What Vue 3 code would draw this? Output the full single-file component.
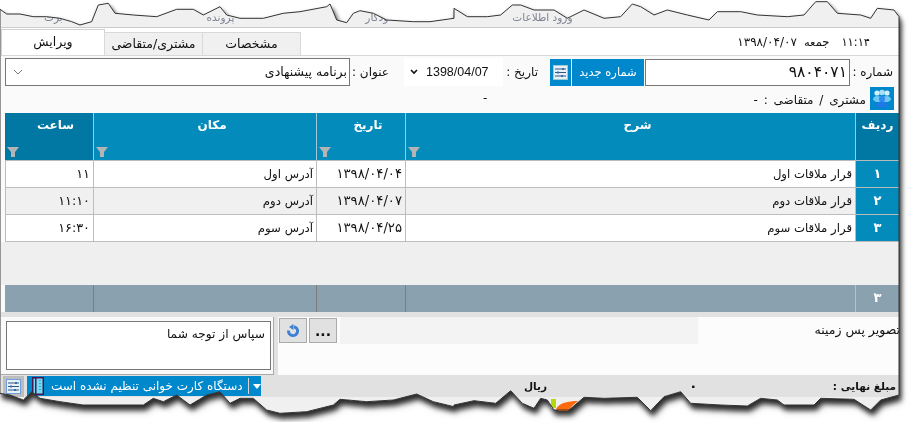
<script setup>
const scale = (list, dx, dy) => list.map(([x, y]) => [x / 3 + dx, y / 3 + dy])
const top = [
  ...scale([[0,28],[20,42],[60,42],[100,50],[140,50],[180,55],[215,65],[240,75],[275,65],[295,15],[325,10],[345,40],[400,45],[470,50],[530,28],[580,28],[610,45],[660,20],[680,45],[720,55],[790,55],[850,40],[900,35],[980,20],[990,12],[1010,60],[1040,68],[1060,40],[1080,32],[1120,40],[1160,60],[1240,65],[1290,65],[1362,55]], 0, 0),
  ...scale([[0,25],[40,50],[100,50],[140,45],[175,15],[200,15],[240,30],[300,30],[340,55],[390,30],[450,55],[500,50],[535,12],[560,20],[600,45],[640,30],[700,45],[765,60],[790,35],[860,35],[910,45],[1000,50],[1050,45],[1085,5],[1120,5],[1150,40],[1220,45],[1250,55],[1270,25],[1320,30],[1335,50]], 454, 0)
]
const bottom = [
  ...scale([[0,370],[30,375],[70,390],[95,365],[120,385],[180,395],[250,405],[350,405],[430,405],[460,385],[490,395],[530,375],[570,405],[620,375],[660,365],[690,400],[720,385],[760,385],[800,420],[840,430],[920,425],[1000,405],[1020,388],[1100,395],[1180,390],[1250,372],[1300,395],[1362,410]], 0, 270),
  ...scale([[0,405],[60,392],[125,400],[170,362],[205,400],[240,415],[260,385],[280,390],[300,420],[345,420],[390,382],[450,385],[550,382],[590,422],[630,380],[680,365],[710,400],[800,405],[880,408],[920,385],[970,390],[990,405],[1080,405],[1100,385],[1200,388],[1250,420],[1280,390],[1335,375]], 454, 270)
]
const outline = [...top, ...[...bottom].reverse()]
const clip = 'polygon(' + outline.map(([x, y]) => `${x.toFixed(1)}px ${y.toFixed(1)}px`).join(',') + ')'
const svgPoints = outline.map(([x, y]) => `${x.toFixed(1)},${y.toFixed(1)}`).join(' ')

const rows = [
  { n: '۱', desc: 'قرار ملاقات اول', date: '۱۳۹۸/۰۴/۰۴', place: 'آدرس اول', time: '۱۱' },
  { n: '۲', desc: 'قرار ملاقات دوم', date: '۱۳۹۸/۰۴/۰۷', place: 'آدرس دوم', time: '۱۱:۱۰' },
  { n: '۳', desc: 'قرار ملاقات سوم', date: '۱۳۹۸/۰۴/۲۵', place: 'آدرس سوم', time: '۱۶:۳۰' }
]
</script>

<template>
  <div class="root">
    <div class="shadow">
      <div class="window" :style="{ clipPath: clip }">
        <div class="menu">
          <span class="m m1">برت</span>
          <span class="m m2">پرونده</span>
          <span class="m m3">ودکار</span>
          <span class="m m4">ورود اطلاعات</span>
        </div>

        <div class="tabs">
          <div class="tab active">ویرایش</div>
          <div class="tab">مشتری/متقاضی</div>
          <div class="tab">مشخصات</div>
          <div class="clock" dir="rtl">
            <span>۱۱:۱۴</span>
            <span class="day">جمعه</span>
            <span class="today">۱۳۹۸/۰۴/۰۷</span>
          </div>
        </div>

        <div class="form">
          <div class="select">
            <svg width="10" height="6" viewBox="0 0 10 6"><path d="M1 1l4 4 4-4" fill="none" stroke="#777" /></svg>
            <span dir="rtl">برنامه پیشنهادی</span>
          </div>
          <span class="lab lab-title" dir="rtl">عنوان :</span>
          <div class="date">
            <svg width="8" height="6" viewBox="0 0 8 6"><path d="M1 1l3 3 3-3" fill="none" stroke="#111" stroke-width="1.6" /></svg>
            <span>1398/04/07</span>
          </div>
          <span class="lab lab-date" dir="rtl">تاریخ :</span>
          <div class="icon-btn">
            <svg width="15" height="15" viewBox="0 0 15 15">
              <rect x=".5" y=".5" width="14" height="14" fill="#e8f1fa" stroke="#9cc" />
              <path d="M2 4h11M2 7.500h11M2 11h11" stroke="#35577f" />
              <path d="M9 3h2v2H9zM4 6.500h2v2H4zM8 10h2v2H8z" fill="#2f6fb5" />
            </svg>
          </div>
          <div class="new-btn" dir="rtl">شماره جدید</div>
          <div class="number" dir="rtl">۹۸۰۴۰۷۱</div>
          <span class="lab lab-num" dir="rtl">شماره :</span>
        </div>

        <div class="customer">
          <span class="dash2">-</span>
          <span class="cust" dir="rtl">مشتری / متقاضی : -</span>
          <div class="cust-icon">
            <svg width="20" height="19" viewBox="0 0 20 19">
              <circle cx="5" cy="4" r="2.600" fill="#d2f0fc" />
              <circle cx="15" cy="4" r="2.600" fill="#d2f0fc" />
              <circle cx="10" cy="3.500" r="2.800" fill="#a8def8" />
              <path d="M1 11c0-3 2-4 4-4 2 0 3 1 5 1s3-1 5-1c2 0 4 1 4 4l-3 2H4z" fill="#70c6f4" />
              <circle cx="10" cy="10" r="3" fill="#2f8bec" />
              <path d="M4 17c0-3 3-4.500 6-4.500s6 1.500 6 4.500l-3 1.500H7z" fill="#1e78e6" />
            </svg>
          </div>
        </div>

        <div class="table">
          <div class="row head">
            <div class="c c-time dark">
              <span class="ht" dir="rtl">ساعت</span>
              <svg class="funnel" width="12" height="10" viewBox="0 0 12 10"><path d="M0 0h12L8 5v5H4V5z" /></svg>
            </div>
            <div class="c c-place">
              <span class="ht" dir="rtl">مکان</span>
              <svg class="funnel" width="12" height="10" viewBox="0 0 12 10"><path d="M0 0h12L8 5v5H4V5z" /></svg>
            </div>
            <div class="c c-date">
              <span class="ht" dir="rtl">تاریخ</span>
              <svg class="funnel" width="12" height="10" viewBox="0 0 12 10"><path d="M0 0h12L8 5v5H4V5z" /></svg>
            </div>
            <div class="c c-desc">
              <span class="ht" dir="rtl">شرح</span>
              <svg class="funnel" width="12" height="10" viewBox="0 0 12 10"><path d="M0 0h12L8 5v5H4V5z" /></svg>
            </div>
            <div class="c c-n dark">
              <span class="ht" dir="rtl">ردیف</span>
            </div>
          </div>
          <div v-for="(r, i) in rows" :key="r.n" class="row body" :class="{ alt: i === 1 }">
            <div class="c c-time" dir="rtl">{{ r.time }}</div>
            <div class="c c-place" dir="rtl">{{ r.place }}</div>
            <div class="c c-date" dir="rtl">{{ r.date }}</div>
            <div class="c c-desc" dir="rtl">{{ r.desc }}</div>
            <div class="c c-n">{{ r.n }}</div>
          </div>
          <div class="empty"></div>
          <div class="row foot">
            <div class="c c-time"></div>
            <div class="c c-place"></div>
            <div class="c c-date"></div>
            <div class="c c-desc"></div>
            <div class="c c-n">۳</div>
          </div>
        </div>

        <div class="lower">
          <div class="note-wrap">
            <div class="note" dir="rtl">سپاس از توجه شما</div>
          </div>
          <div class="bg-panel">
            <div class="bg-row">
              <button class="small-btn">
                <svg width="14" height="14" viewBox="0 0 14 14">
                  <path d="M8 2.700A4.500 4.500 0 1 1 2.600 6.500" fill="none" stroke="#3f80d4" stroke-width="3" />
                  <path d="M7.500 0v6L3 3z" fill="#3f80d4" />
                </svg>
              </button>
              <button class="small-btn dots">...</button>
              <div class="path"></div>
              <div class="bg-label" dir="rtl">تصویر پس زمینه</div>
            </div>
          </div>
        </div>

        <div class="status">
          <div class="gear">
            <svg width="15" height="15" viewBox="0 0 15 15">
              <rect x=".5" y=".5" width="14" height="14" fill="#e8f1fa" stroke="#6f9fe0" />
              <path d="M2 4h11M2 7.500h11M2 11h11" stroke="#35577f" />
              <path d="M9 3h2v2H9zM4 6.500h2v2H4zM8 10h2v2H8z" fill="#2f6fb5" />
            </svg>
          </div>
          <div class="reader">
            <svg width="12" height="18" viewBox="0 0 12 18">
              <rect x=".75" y=".75" width="10.500" height="16.500" fill="#6fdcf5" stroke="#4a1450" stroke-width="1.500" />
              <rect x="3" y="1" width="1.500" height="16" fill="#4a1450" />
              <path d="M8 3v12" stroke="#1b6f96" stroke-dasharray="1 2" />
            </svg>
            <span dir="rtl">دستگاه کارت خوانی تنظیم نشده است</span>
            <i class="sep"></i>
            <svg width="8" height="5" viewBox="0 0 8 5"><path d="M0 0h8L4 5z" fill="#fff" /></svg>
          </div>
          <span class="rial" dir="rtl">ریال</span>
          <span class="zero">۰</span>
          <span class="total" dir="rtl">مبلغ نهایی :</span>
        </div>
        <div class="tail"></div>
      </div>
    </div>

    <svg class="edge" width="908" height="422" viewBox="0 0 908 422">
      <path d="M551 399h5v9h-5z" fill="#b5d80f" />
      <path d="M556 409c3-6 12-8 22-8l-6 5-4 5h-9z" fill="#ff6a0d" />
      <polygon :points="svgPoints" fill="none" stroke="#333" stroke-width="1" />
    </svg>
  </div>
</template>

<style>
html, body { margin: 0; background: #fff; }
</style>

<style scoped>
.root {
  position: relative;
  width: 908px;
  height: 422px;
  overflow: hidden;
  background: #fff;
  font-family: "DejaVu Sans", sans-serif;
  font-size: 12px;
  color: #111;
}
.shadow { width: 899px; height: 422px; filter: drop-shadow(2px 5px 2.5px rgba(0, 0, 0, .75)) drop-shadow(1px 2px 2px rgba(0, 0, 0, .35)); }
.window {
  width: 899px;
  height: 422px;
  padding-left: 1px;
  box-sizing: border-box;
  background: #fafafa;
  display: flex;
  flex-direction: column;
}
.menu {
  height: 27px;
  flex: none;
  background: #f0f0f0;
  border-bottom: 1px solid #ccc;
  display: flex;
  align-items: flex-end;
  color: #7f8494;
  font-size: 10.5px;
}
.m { direction: rtl; padding-bottom: 3px; line-height: 14px; white-space: nowrap; }
.m1 { margin-left: 43px; }
.m2 { margin-left: 144px; }
.m3 { margin-left: 131px; }
.m4 { margin-left: 124px; }

.tabs { height: 28px; flex: none; display: flex; align-items: flex-end; background: #fff; border-bottom: 1px solid #d8d8d8; box-sizing: border-box; font-size: 12.5px; }
.tab {
  width: 99px; height: 23px; line-height: 22px; text-align: center; direction: rtl;
  background: #f0f0f0; border: 1px solid #d9d9d9; border-bottom: 0; box-sizing: border-box; margin-left: -1px;
  white-space: nowrap;
}
.tab:first-child { margin-left: 0; }
.tab.active { width: 104px; height: 26px; line-height: 24px; background: #fff; border-color: #d0d0d0; }
.clock {
  margin-left: auto; margin-right: 29px; align-self: center; display: flex; font-size: 11.5px;
}
.day { margin-right: 12px; }
.today { margin-right: 7px; font-size: 12px; }

.form { height: 31px; flex: none; display: flex; align-items: center; padding-left: 4px; background: #fafafa; box-sizing: border-box; }
.select {
  width: 345px; height: 28px; box-sizing: border-box; border: 1px solid #777; background: #fff;
  display: flex; align-items: center; justify-content: space-between; padding: 0 2px 0 7px; font-size: 12.5px;
}
.lab { white-space: nowrap; }
.lab-title { margin-left: 12px; width: 27px; }
.date { width: 99px; height: 28px; background: #fff; display: flex; align-items: center; gap: 8px; padding-left: 6px; box-sizing: border-box; margin-left: 15px; font-family: "Liberation Sans", sans-serif; font-size: 12.500px; }
.lab-date { width: 34px; margin-left: 1px; }
.icon-btn { width: 21px; height: 27px; margin-top: 1px; background: #0088cc; display: flex; align-items: center; justify-content: center; margin-left: 12px; }
.new-btn { width: 72px; height: 27px; margin-top: 1px; line-height: 26px; margin-left: 1px; background: #0088cc; color: #fff; text-align: center; white-space: nowrap; font-size: 11.500px; }
.number { width: 205px; height: 27px; margin-top: 1px; margin-left: 1px; border: 1px solid #777; box-sizing: border-box; background: #fff; line-height: 24px; padding-right: 2px; font-size: 15.500px; }
.lab-num { margin-left: 5px; width: 38px; }

.customer { height: 26px; flex: none; display: flex; align-items: flex-start; padding-left: 482px; box-sizing: border-box; }
.dash2 { line-height: 22px; }
.cust { margin-left: auto; line-height: 26px; white-space: nowrap; word-spacing: 2px; }
.cust-icon { width: 24px; height: 23px; background: #0088cc; display: flex; align-items: center; justify-content: center; margin-left: 4px; margin-right: 5px; }

.table { margin-left: 4px; flex: none; }
.row { display: flex; }
.c { box-sizing: border-box; flex: none; }
.c-time { width: 89px; }
.c-place { width: 223px; }
.c-date { width: 89px; }
.c-desc { width: 450px; }
.c-n { width: 43px; }

.head { height: 48px; }
.head .c { background: #038bbb; color: #fff; font-weight: bold; font-size: 12px; text-align: center; border-right: 1px solid #9cc9dc; border-bottom: 1px solid #bbb; line-height: 24px; display: flex; flex-direction: column; align-items: center; }
.head .c.dark { background: #0078a3; }
.head .c-n { border-right: 0; }
.ht { line-height: 24px; margin-left: 14px; }
.head .c-time .ht { margin-left: 13px; }
.head .c-n .ht { margin-left: 0; }
.funnel { fill: #b4b4b4; margin-top: auto; margin-bottom: 3px; align-self: flex-start; margin-left: 2px; }

.body { height: 27px; font-size: 11.7px; }
.body .c { background: #fff; border-right: 1px solid #bdbdbd; border-bottom: 1px solid #bdbdbd; line-height: 26px; text-align: right; padding-right: 3px; white-space: nowrap; }
.body.alt .c { background: #f0f0f0; }
.body .c-time { border-left: 1px solid #bdbdbd; font-size: 12.800px; }
.body .c-date { font-size: 13.200px; }
.body .c-n, .body.alt .c-n { background: #038bbb; color: #fff; text-align: center; font-weight: bold; font-size: 13px; padding: 0; border-right: 0; border-bottom-color: #bbb; }

.empty { height: 43px; background: #efefef; margin-left: -4px; }
.foot { height: 27px; background: #8aa2af; }
.foot .c { border-right: 1px solid #7c7c7c; color: #fff; font-weight: bold; font-size: 13px; text-align: center; line-height: 25px; }
.foot .c-n { border-right: 0; }
.foot .c-desc { border-right-color: #b5c2c9; }

.lower { margin-top: 5px; display: flex; height: 58px; flex: none; background: #e2e2e2; box-shadow: 0 -5px 0 #e2e2e2; }
.note-wrap { width: 273px; background: #fafafa; box-sizing: border-box; border-right: 1px solid #aaa; border-bottom: 1px solid #aaa; padding: 4px 2px 4px 5px; }
.note { height: 49px; box-sizing: border-box; border: 1px solid #777; background: #fff; padding: 5px 5px; font-size: 12.200px; }
.bg-panel { margin-left: 4px; flex: 1; background: #fcfcfc; min-width: 0; }
.bg-row { height: 27px; display: flex; align-items: center; padding-left: 1px; }
.small-btn { width: 28px; height: 25px; padding: 0; margin: 0 2px 0 0; background: #e1e1e1; border: 1px solid #aaa; box-sizing: border-box; display: flex; align-items: center; justify-content: center; }
.dots { font: bold 14px/14px "DejaVu Sans", sans-serif; color: #111; }
.path { width: 358px; height: 27px; margin-left: 1px; background: #f3f3f3; }
.bg-label { margin-left: auto; margin-right: -1px; white-space: nowrap; padding-bottom: 2px; font-size: 12.500px; }

.status { height: 22px; flex: none; background: #e1e1e1; display: flex; align-items: center; padding-left: 2px; font-weight: bold; font-size: 10.500px; }
.gear { width: 21px; height: 21px; background: #bdbdbd; display: flex; align-items: center; justify-content: center; }
.reader { width: 234px; height: 20px; margin-left: 3px; background: #0088cc; color: #fff; font-weight: normal; font-size: 12px; display: flex; align-items: center; padding-left: 5px; box-sizing: border-box; white-space: nowrap; }
.reader span { margin-left: 7px; }
.sep { width: 1px; height: 16px; background: #d6d6d6; margin-left: 5px; margin-right: 4px; }
.rial { margin-left: 263px; }
.zero { margin-left: 142px; font-size: 14px; }
.total { margin-left: auto; margin-right: 3px; white-space: nowrap; }
.tail { flex: 1; background: #f0f0f0; }

.edge { position: absolute; left: 0; top: 0; pointer-events: none; }
</style>
